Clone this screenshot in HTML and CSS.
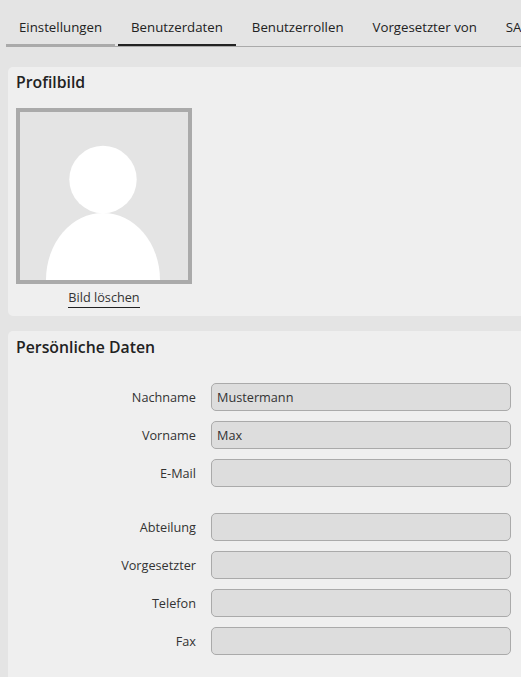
FILE: index.html
```html
<!DOCTYPE html>
<html lang="de">
<head>
<meta charset="utf-8">
<title>Benutzerdaten</title>
<link rel="stylesheet" href="styles.css">
</head>
<body>
<nav class="tabs">
  <a class="tab tab-first">Einstellungen</a>
  <a class="tab tab-active">Benutzerdaten</a>
  <a class="tab">Benutzerrollen</a>
  <a class="tab">Vorgesetzter von</a>
  <a class="tab">SAP</a>
</nav>
<section class="card card-photo">
  <h2>Profilbild</h2>
  <div class="photo-col">
    <div class="photo">
      <svg width="168" height="168" viewBox="0 0 168 168">
        <circle cx="83" cy="67.5" r="33.7" fill="#fff"/>
        <path d="M26 168 A57 67 0 0 1 140 168 Z" fill="#fff"/>
      </svg>
    </div>
    <a class="delete">Bild löschen</a>
  </div>
</section>
<section class="card card-data">
  <h2 class="data-title">Persönliche Daten</h2>
  <div class="form">
    <div class="group">
      <div class="row"><label>Nachname</label><input value="Mustermann"></div>
      <div class="row"><label>Vorname</label><input value="Max"></div>
      <div class="row"><label>E-Mail</label><input></div>
    </div>
    <div class="group">
      <div class="row"><label>Abteilung</label><input></div>
      <div class="row"><label>Vorgesetzter</label><input></div>
      <div class="row"><label>Telefon</label><input></div>
      <div class="row"><label>Fax</label><input></div>
    </div>
  </div>
</section>
</body>
</html>
```
FILE: styles.css
```css
* { box-sizing: border-box; }
html, body { height: 100%; }
body {
  margin: 0;
  background: #e4e4e4;
  color: #222;
  font-family: "Open Sans", sans-serif;
  font-size: 12.7px;
  overflow: hidden;
}
.tabs {
  display: flex;
  height: 47px;
  margin-left: 6px;
  border-bottom: 1px solid #aaa;
  white-space: nowrap;
  overflow: hidden;
}
.tab {
  flex: none;
  height: 47px;
  padding: 18px 13px 0;
  font-size: 13.26px;
  line-height: 18px;
  margin-right: 3px;
  border-bottom: 3px solid transparent;
}
.tab-first { border-bottom-color: #aaa; }
.tab-active { border-bottom-color: #222; }
.card {
  margin-left: 8px;
  background: #efefef;
  border-radius: 5px 0 0 5px;
  padding: 0 8px;
}
.card-photo { margin-top: 20px; height: 249px; }
.card-data { margin-top: 15px; height: 360px; }
h2 {
  margin: 0;
  padding-top: 4px;
  font-size: 15.8px;
  font-weight: 600;
  line-height: 22px;
  color: #222;
}
.data-title { padding-top: 5px; }
.photo-col {
  width: 176px;
  margin-top: 15px;
  display: flex;
  flex-direction: column;
  align-items: center;
}
.photo {
  width: 176px;
  height: 176px;
  border: 4px solid #aaa;
  background: #e4e4e4;
  overflow: hidden;
}
.photo svg { display: block; }
.delete {
  margin-top: 4px;
  line-height: 18px;
  padding-bottom: 1px;
  border-bottom: 1px solid #222;
  color: #333;
}
.form { margin-top: 25px; display: flex; flex-direction: column; gap: 26px; }
.group { display: flex; flex-direction: column; gap: 10px; }
.row { display: flex; align-items: center; }
.row label { width: 180px; text-align: right; color: #333; }
.row input {
  margin-left: 15px;
  width: 300px;
  height: 28px;
  border: 1px solid #aaa;
  border-radius: 5px;
  background: #ddd;
  padding: 0 5px;
  font: 12.7px "Open Sans", sans-serif;
  color: #333;
}
```
